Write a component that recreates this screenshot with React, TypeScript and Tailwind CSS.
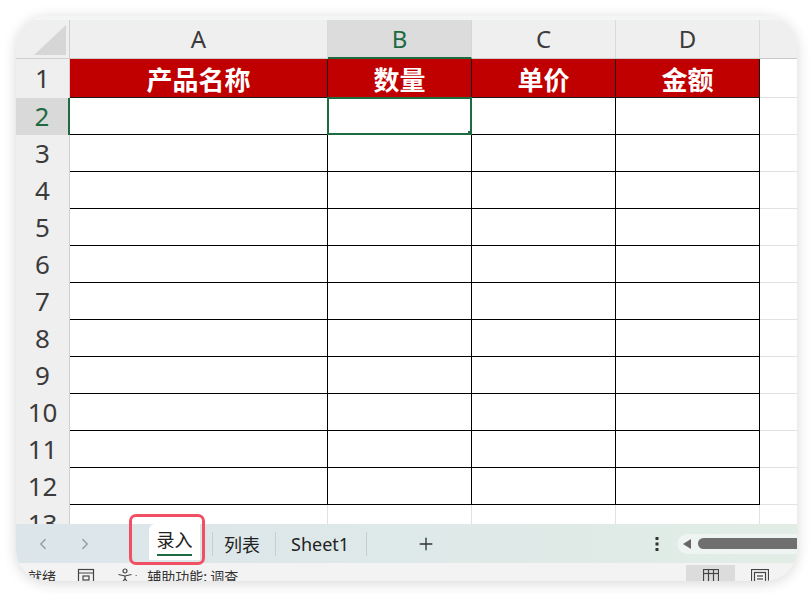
import { ChevronLeft, ChevronRight, Plus } from "lucide-react";

const LATIN = "font-['Noto_Sans','Open_Sans','Noto_Sans_CJK_SC',sans-serif]";
const CJK = "font-['Noto_Sans_CJK_SC','Noto_Sans',sans-serif]";

const columns = [
  { letter: "A", title: "产品名称", width: "w-[258px]" },
  { letter: "B", title: "数量", width: "w-[144px]" },
  { letter: "C", title: "单价", width: "w-[144px]" },
  { letter: "D", title: "金额", width: "w-[144px]" },
];

const bodyRows = [2, 3, 4, 5, 6, 7, 8, 9, 10, 11, 12];

function RowHeader({ n, active }: { n: number; active?: boolean }) {
  return (
    <div
      className={
        active
          ? "flex h-full w-[54px] shrink-0 items-center justify-center border-r-2 border-[#1e6b41] bg-[#d9d9d9] text-[26px] text-[#1e6b41]"
          : "flex h-full w-[54px] shrink-0 items-center justify-center border-r border-[#cfcfcf] bg-[#efefef] text-[26px] text-[#3b3b3b]"
      }
    >
      {n}
    </div>
  );
}

function ColumnHeaders() {
  return (
    <div className="flex h-[39px]">
      <div className="relative w-[54px] shrink-0 border-r border-b border-[#cfcfcf] bg-[#efefef]">
        <svg className="absolute right-[3px] bottom-[3px]" width="32" height="30" viewBox="0 0 32 30">
          <polygon points="32,0 32,30 0,30" fill="#d6d6d6" />
        </svg>
      </div>
      {columns.map((col) =>
        col.letter === "B" ? (
          <div
            key={col.letter}
            className={`${col.width} flex shrink-0 items-center justify-center border-r border-b-2 border-r-[#d6d6d6] border-b-[#1e6b41] bg-[#dcdcdc] text-[24px] text-[#1e6b41]`}
          >
            {col.letter}
          </div>
        ) : (
          <div
            key={col.letter}
            className={`${col.width} flex shrink-0 items-center justify-center border-r border-b border-r-[#dadada] border-b-[#c8c8c8] bg-[#efefef] text-[24px] text-[#3b3b3b]`}
          >
            {col.letter}
          </div>
        ),
      )}
      <div className="flex-1 border-b border-[#c8c8c8] bg-[#efefef]" />
    </div>
  );
}

function TitleRow() {
  return (
    <div className="flex h-[39px]">
      <RowHeader n={1} />
      {columns.map((col) => (
        <div
          key={col.letter}
          className={`${col.width} ${CJK} flex shrink-0 items-center justify-center border-r border-b border-[#1a1a1a] bg-[#c00000] text-[26px] font-bold text-white`}
        >
          {col.title}
        </div>
      ))}
      <div className="flex-1 border-b border-[#e1e1e1] bg-white" />
    </div>
  );
}

function BodyRow({ n }: { n: number }) {
  return (
    <div className="flex h-[37px]">
      <RowHeader n={n} active={n === 2} />
      {columns.map((col) => (
        <div
          key={col.letter}
          className={`${col.width} relative shrink-0 border-r border-b border-black bg-white`}
        >
          {n === 2 && col.letter === "B" && (
            <div className="absolute -top-px -left-px h-[38px] w-[145px] border-2 border-[#1e6b41]">
              <div className="absolute -right-[4px] -bottom-[4px] h-[6px] w-[6px] bg-[#1e6b41]" />
            </div>
          )}
        </div>
      ))}
      <div className="flex-1 border-b border-[#e1e1e1] bg-white" />
    </div>
  );
}

function TabBar() {
  return (
    <div className="relative flex h-[39px] items-center bg-gradient-to-r from-[#dce5ea] via-[#dee9e9] to-[#e1ede5]">
      <div className="flex w-[82px] items-center gap-[24px] pl-[18px] text-[#8f9497]">
        <ChevronLeft size={18} strokeWidth={1.6} />
        <ChevronRight size={18} strokeWidth={1.6} />
      </div>
      <div className="ml-[51px] flex h-full items-start">
        <div className={`${CJK} relative flex h-[36px] w-[51px] flex-col items-center justify-center rounded-tl-[6px] bg-white text-[18px] text-[#222]`}>
          <span className="mt-[2px] leading-none">录入</span>
          <span className="mt-[6px] h-[2px] w-[35px] bg-[#1e6b41]" />
        </div>
      </div>
      <span className="ml-[12px] h-[24px] w-px bg-[#c9cdcf]" />
      <span className={`${CJK} ml-[11px] text-[18px] leading-none text-[#222]`}>列表</span>
      <span className="ml-[15px] h-[24px] w-px bg-[#c9cdcf]" />
      <span className={`${LATIN} ml-[15px] text-[18px] leading-none text-[#222]`}>Sheet1</span>
      <span className="ml-[17px] h-[24px] w-px bg-[#c9cdcf]" />
      <Plus className="ml-[49px] text-[#333]" size={20} strokeWidth={1.6} />
      <div className="ml-auto flex items-center">
        <svg width="4" height="14" viewBox="0 0 4 14" className="mr-[18px]">
          <rect x="0.5" y="0" width="3" height="3" fill="#333" />
          <rect x="0.5" y="5.5" width="3" height="3" fill="#333" />
          <rect x="0.5" y="11" width="3" height="3" fill="#333" />
        </svg>
        <div className="flex h-[20px] w-[120px] items-center rounded-l-full bg-[#eef4f1] pl-[6px]">
          <svg width="8" height="10" viewBox="0 0 8 10">
            <polygon points="8,0 8,10 0,5" fill="#666" />
          </svg>
          <div className="ml-[7px] h-[11px] flex-1 rounded-l-full bg-[#6f6f6f]" />
        </div>
      </div>
      {/* highlight around the active sheet tab */}
      <div className="pointer-events-none absolute top-[-10px] left-[113px] h-[51px] w-[76px] rounded-[7px] border-[3px] border-[#f04f64]" />
    </div>
  );
}

function StatusBar() {
  return (
    <div className={`${CJK} flex h-[18px] items-start overflow-hidden bg-[#f3f3f3] pt-[6px] text-[14px] leading-none text-[#333]`}>
      <span className="ml-[12px]">就绪</span>
      <svg className="ml-[21px] -mt-[1px]" width="18" height="18" viewBox="0 0 18 18" fill="none" stroke="#444" strokeWidth="1.2">
        <rect x="1.5" y="1.5" width="15" height="14" />
        <line x1="1.5" y1="5" x2="16.5" y2="5" />
        <rect x="6" y="8" width="6" height="4" />
      </svg>
      <svg className="ml-[22px] -mt-[1px]" width="16" height="16" viewBox="0 0 16 16" fill="none" stroke="#444" strokeWidth="1.2">
        <circle cx="8" cy="3" r="2" />
        <path d="M1.5 6.5 L8 8 L14.5 6.5" />
        <path d="M8 8 L8 10.5 L5 15 M8 10.5 L11 15" />
      </svg>
      <span className="ml-[2px] text-[8px]">.</span>
      <span className="ml-[10px]">辅助功能: 调查</span>
      <div className="ml-auto -mt-[4px] flex items-start pr-[12px]">
        <div className="flex h-[18px] w-[49px] justify-center bg-[#dcdcdc] pt-[4px]">
          <svg width="16" height="14" viewBox="0 0 16 14" fill="none" stroke="#444" strokeWidth="1.2">
            <rect x="0.5" y="0.5" width="15" height="13" />
            <line x1="0.5" y1="4.5" x2="15.5" y2="4.5" />
            <line x1="5.5" y1="0.5" x2="5.5" y2="13.5" />
            <line x1="10.5" y1="0.5" x2="10.5" y2="13.5" />
          </svg>
        </div>
        <div className="flex w-[50px] justify-center pt-[4px]">
          <svg width="18" height="16" viewBox="0 0 18 16" fill="none" stroke="#444" strokeWidth="1.2">
            <rect x="0.5" y="0.5" width="17" height="15" />
            <rect x="3.5" y="3.5" width="11" height="12" />
            <line x1="6" y1="7" x2="12" y2="7" />
            <line x1="6" y1="10" x2="12" y2="10" />
          </svg>
        </div>
      </div>
    </div>
  );
}

export default function App() {
  return (
    <div className={`${LATIN} h-[594px] w-[812px] bg-white pt-[16px] pl-[16px]`}>
      <div className="flex h-[565px] w-[781px] flex-col overflow-hidden rounded-[32px] bg-[#f6f7f7] shadow-[0_2px_14px_rgba(0,0,0,0.16)]">
        <div className="h-[4px] shrink-0 bg-[#f4f5f5]" />
        <ColumnHeaders />
        <TitleRow />
        {bodyRows.map((n) => (
          <BodyRow key={n} n={n} />
        ))}
        <div className="flex h-[19px] items-start overflow-hidden">
          <div className="flex h-[37px] w-full">
            <div className="flex h-full w-[54px] shrink-0 items-center justify-center border-r border-[#cfcfcf] bg-[#efefef] text-[26px] text-[#3b3b3b]">
              13
            </div>
            {columns.map((col) => (
              <div key={col.letter} className={`${col.width} shrink-0 border-r border-[#e1e1e1] bg-white`} />
            ))}
            <div className="flex-1 bg-white" />
          </div>
        </div>
        <TabBar />
        <StatusBar />
      </div>
    </div>
  );
}
